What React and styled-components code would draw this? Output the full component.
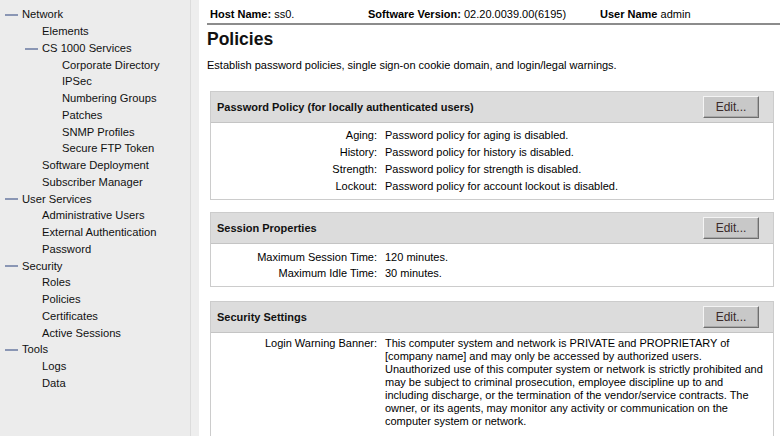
import styled, { createGlobalStyle } from 'styled-components'

const GlobalStyle = createGlobalStyle`
  html, body { margin: 0; padding: 0; background: #fff; }
  body { font-family: "Liberation Sans", Arial, sans-serif; font-size: 11px; color: #000; }
`

const Page = styled.div`
  display: flex;
  width: 780px;
  height: 436px;
  overflow: hidden;
`

const Sidebar = styled.nav`
  width: 191px;
  flex: none;
  background: #ececec;
  border-right: 1px solid #dcdcdc;
  padding-top: 6px;
  box-sizing: border-box;
`

const Gutter = styled.div`
  width: 8px;
  flex: none;
  background: #eeeeee;
`

const NavItem = styled.div`
  display: flex;
  align-items: center;
  height: 16.75px;
  padding-left: ${p => 22 + p.$level * 20}px;
  position: relative;
  white-space: nowrap;
  color: #111;
  font-size: 11.2px;
`

const Dash = styled.span`
  position: absolute;
  left: ${p => 5 + p.$level * 20}px;
  top: 8px;
  width: 13px;
  height: 2px;
  background: #8a96b4;
`

const Main = styled.main`
  flex: 1;
  padding: 0 0 0 8px;
  min-width: 0;
`

const TopBar = styled.div`
  display: flex;
  padding: 8px 0 0 3px;
  height: 25px;
  box-sizing: border-box;
  border-bottom: 2px solid #8c8c8c;
  white-space: nowrap;
`

const Field = styled.div`
  width: ${p => p.$w}px;
  flex: none;
  b { font-weight: bold; }
`

const Title = styled.h1`
  margin: 3px 0 0;
  font-size: 17.5px;
  font-weight: bold;
  color: #111;
  line-height: 22px;
`

const Intro = styled.p`
  margin: 8px 0 0;
  line-height: 14px;
`

const Panel = styled.section`
  margin: ${p => p.$top}px 6px 0 3px;
  border: 1px solid #cccccc;
`

const PanelHead = styled.div`
  display: flex;
  align-items: center;
  justify-content: space-between;
  height: 30px;
  padding: 0 14px 0 6px;
  background: #dcdcdc;
  border-bottom: 1px solid #c4c4c4;
  font-weight: bold;
  color: #111;
`

const EditButton = styled.button`
  font-family: "Liberation Sans", Arial, sans-serif;
  font-size: 12px;
  width: 56px;
  height: 22px;
  padding: 0;
  background: #c8c8c8;
  color: #3a2a2a;
  border: 1px solid;
  border-color: #f4f4f4 #6e6e6e #6e6e6e #f4f4f4;
  box-shadow: inset -1px -1px 0 #a8a8a8;
`

const PanelBody = styled.div`
  display: grid;
  grid-template-columns: 162px 1fr;
  column-gap: 8px;
  padding: ${p => p.$pad}px 0 ${p => p.$bottom ?? p.$pad}px 4px;
  background: #fff;
`

const Label = styled.div`
  text-align: right;
  line-height: ${p => p.$lh}px;
  white-space: nowrap;
`

const Value = styled.div`
  line-height: ${p => p.$lh}px;
  max-width: ${p => p.$max || 600}px;
`

const nav = [
  [0, 'Network', true],
  [1, 'Elements'],
  [1, 'CS 1000 Services', true],
  [2, 'Corporate Directory'],
  [2, 'IPSec'],
  [2, 'Numbering Groups'],
  [2, 'Patches'],
  [2, 'SNMP Profiles'],
  [2, 'Secure FTP Token'],
  [1, 'Software Deployment'],
  [1, 'Subscriber Manager'],
  [0, 'User Services', true],
  [1, 'Administrative Users'],
  [1, 'External Authentication'],
  [1, 'Password'],
  [0, 'Security', true],
  [1, 'Roles'],
  [1, 'Policies'],
  [1, 'Certificates'],
  [1, 'Active Sessions'],
  [0, 'Tools', true],
  [1, 'Logs'],
  [1, 'Data'],
]

const passwordRows = [
  ['Aging:', 'Password policy for aging is disabled.'],
  ['History:', 'Password policy for history is disabled.'],
  ['Strength:', 'Password policy for strength is disabled.'],
  ['Lockout:', 'Password policy for account lockout is disabled.'],
]

const sessionRows = [
  ['Maximum Session Time:', '120 minutes.'],
  ['Maximum Idle Time:', '30 minutes.'],
]

function Rows({ rows, lh }) {
  return rows.map(([k, v]) => (
    <>
      <Label key={k} $lh={lh}>{k}</Label>
      <Value key={k + 'v'} $lh={lh}>{v}</Value>
    </>
  ))
}

function App() {
  return (
    <>
      <GlobalStyle />
      <Page>
        <Sidebar>
          {nav.map(([level, text, open]) => (
            <NavItem key={text} $level={level}>
              {open && <Dash $level={level} />}
              {text}
            </NavItem>
          ))}
        </Sidebar>
        <Gutter />
        <Main>
          <TopBar>
            <Field $w={158}><b>Host Name:</b> ss0.</Field>
            <Field $w={232}><b>Software Version:</b> 02.20.0039.00(6195)</Field>
            <Field $w={120}><b>User Name</b> admin</Field>
          </TopBar>
          <Title>Policies</Title>
          <Intro>Establish password policies, single sign-on cookie domain, and login/legal warnings.</Intro>

          <Panel $top={19}>
            <PanelHead>
              Password Policy (for locally authenticated users)
              <EditButton>Edit...</EditButton>
            </PanelHead>
            <PanelBody $pad={4}>
              <Rows rows={passwordRows} lh={17} />
            </PanelBody>
          </Panel>

          <Panel $top={12}>
            <PanelHead>
              Session Properties
              <EditButton>Edit...</EditButton>
            </PanelHead>
            <PanelBody $pad={5}>
              <Rows rows={sessionRows} lh={16} />
            </PanelBody>
          </Panel>

          <Panel $top={14}>
            <PanelHead>
              Security Settings
              <EditButton>Edit...</EditButton>
            </PanelHead>
            <PanelBody $pad={4} $bottom={20}>
              <Label $lh={13}>Login Warning Banner:</Label>
              <Value $lh={13} $max={380}>
                This computer system and network is PRIVATE and PROPRIETARY of [company name] and may only be accessed by authorized users.
                <br />
                Unauthorized use of this computer system or network is strictly prohibited and may be subject to criminal prosecution, employee discipline up to and including discharge, or the termination of the vendor/service contracts. The owner, or its agents, may monitor any activity or communication on the computer system or network.
              </Value>
            </PanelBody>
          </Panel>
        </Main>
      </Page>
    </>
  )
}

export default App
